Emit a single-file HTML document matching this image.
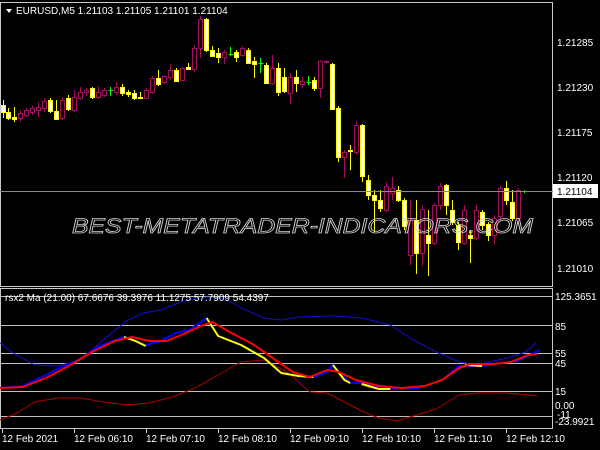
<!DOCTYPE html>
<html><head><meta charset="utf-8"><style>
html,body{margin:0;padding:0;background:#000;width:600px;height:450px;overflow:hidden}
svg{display:block}
text{font-family:"Liberation Sans",sans-serif}
</style></head><body>
<svg id="s" width="600" height="450" xmlns="http://www.w3.org/2000/svg">
<defs><clipPath id="cp"><rect x="0" y="288" width="552" height="140"/></clipPath></defs>
<rect width="600" height="450" fill="#000"/>
<g id="c"></g>
<rect x="0.5" y="2.5" width="552" height="284" fill="none" stroke="#c8c8c8"/>
<rect x="0.5" y="288.5" width="552" height="140" fill="none" stroke="#c8c8c8"/>
<line x1="0" y1="191.5" x2="553" y2="191.5" stroke="#8c8c8c"/>
<g stroke="#c0c0c0" stroke-width="1">
<line x1="0" y1="296.5" x2="553" y2="296.5"/>
<line x1="0" y1="325.5" x2="553" y2="325.5"/>
<line x1="0" y1="353.5" x2="553" y2="353.5"/>
<line x1="0" y1="363.5" x2="553" y2="363.5"/>
<line x1="0" y1="391.5" x2="553" y2="391.5"/>
<line x1="0" y1="416.5" x2="553" y2="416.5"/>
</g>
<g clip-path="url(#cp)"><g id="ind" fill="none" stroke-linejoin="round" transform="scale(1.148,1)"></g></g>
<text x="72" y="233" font-size="21" font-style="italic" textLength="461" lengthAdjust="spacingAndGlyphs" fill="none" stroke="#d0d0d0" stroke-width="0.8">BEST-METATRADER-INDICATORS.COM</text>
<g fill="#fff" font-size="10">
<polygon points="6,9 12,9 9,13" fill="#fff"/>
<text x="16" y="14">EURUSD,M5  1.21103 1.21105 1.21101 1.21104</text>
<text x="557" y="46">1.21285</text>
<text x="557" y="91">1.21230</text>
<text x="557" y="136">1.21175</text>
<text x="557" y="181">1.21120</text>
<text x="557" y="226">1.21065</text>
<text x="557" y="272">1.21010</text>
<text x="5" y="301">rsx2 Ma (21.00) 67.6676 39.3976 11.1275 57.7909 54.4397</text>
<text x="555" y="300">125.3651</text>
<text x="555" y="330">85</text>
<text x="555" y="357">55</text>
<text x="555" y="367">45</text>
<text x="555" y="395">15</text>
<text x="555" y="409">0.00</text>
<text x="557" y="418">-11</text>
<text x="555" y="425">-23.9921</text>
<text x="2" y="442">12 Feb 2021</text>
<text x="74" y="442">12 Feb 06:10</text>
<text x="146" y="442">12 Feb 07:10</text>
<text x="218" y="442">12 Feb 08:10</text>
<text x="290" y="442">12 Feb 09:10</text>
<text x="362" y="442">12 Feb 10:10</text>
<text x="434" y="442">12 Feb 11:10</text>
<text x="506" y="442">12 Feb 12:10</text>
</g>
<rect x="553" y="184" width="45" height="14" fill="#fff"/>
<text x="557" y="195" font-size="10" fill="#000">1.21104</text>
<g stroke="#c8c8c8" id="ticks"></g>
</svg>
<script>
var NS="http://www.w3.org/2000/svg";
function el(p,n,a){var e=document.createElementNS(NS,n);for(var k in a)e.setAttribute(k,a[k]);p.appendChild(e);return e;}
var Y='y',M='m',G='g';
var bars=[[3,Y,105,112,100,118],[8,Y,112,118,108,120],[14,Y,117,119,107,122],[20,M,113,118,110,122],[26,M,110,115,108,117],[32,M,108,112,106,115],[38,M,107,110,102,117],[44,M,101,108,98,112],[50,Y,100,111,98,113],[56,Y,111,119,100,120],[62,M,100,118,97,120],[68,Y,98,109,95,111],[74,M,97,110,90,112],[80,M,92,98,87,100],[86,M,90,92,88,96],[92,Y,88,97,87,99],[98,M,92,97,86,99],[104,M,90,95,88,97],[110,G,90,90,87,96],[116,M,87,92,82,95],[122,Y,87,93,84,96],[128,Y,92,94,90,97],[134,Y,93,98,90,100],[140,Y,97,97,92,99],[146,M,90,98,88,99],[152,M,78,92,76,94],[158,Y,78,84,70,86],[164,M,76,82,75,84],[170,M,70,77,64,80],[176,Y,70,81,68,82],[182,M,68,80,67,81],[188,Y,67,69,63,70],[194,M,48,69,45,72],[200,M,19,48,16,58],[206,Y,19,50,18,52],[212,Y,50,56,46,57],[218,Y,53,57,48,63],[224,M,52,57,50,64],[230,G,54,54,47,56],[236,Y,52,57,50,62],[242,M,48,55,46,57],[248,Y,50,63,48,64],[254,Y,61,64,57,78],[260,G,63,63,58,73],[266,Y,65,83,63,84],[272,M,68,83,55,85],[278,Y,68,92,63,96],[284,Y,77,91,68,93],[290,M,77,93,73,104],[296,Y,77,83,70,92],[302,M,81,84,77,88],[308,G,82,82,76,85],[314,Y,80,88,77,91],[320,M,61,88,60,98],[326,M,61,62,60,63],[332,Y,64,109,63,110],[338,Y,108,157,106,162],[344,M,152,157,150,178],[350,Y,150,151,145,170],[356,M,125,152,121,155],[362,Y,125,176,124,182],[368,Y,180,195,175,200],[374,Y,195,200,190,232],[380,Y,200,208,190,212],[386,M,186,210,182,212],[392,M,188,193,177,200],[398,Y,190,200,186,202],[404,Y,200,226,198,230],[410,M,220,255,200,265],[416,Y,220,253,200,274],[422,M,209,253,205,266],[428,Y,235,243,210,276],[434,M,205,243,203,245],[440,M,186,205,183,210],[446,Y,185,205,184,215],[452,Y,210,222,200,225],[458,Y,225,242,222,250],[464,M,210,243,205,245],[470,Y,235,238,230,263],[476,M,210,238,205,240],[482,Y,212,225,210,230],[488,Y,224,235,222,241],[494,M,218,235,215,244],[500,M,188,216,186,220],[506,Y,188,200,181,205],[512,Y,202,218,190,221],[518,M,190,218,188,220],[524,G,191,191,190,193]];
var c=document.getElementById('c');
bars.forEach(function(b){
 var col=b[1]==Y?'#ffff00':b[1]==M?'#a0105a':'#00ff00';
 var x=b[0]+0.5;
 el(c,'line',{x1:x,y1:b[4],x2:x,y2:b[5],stroke:col,'stroke-width':1});
 if(b[1]==G){el(c,'line',{x1:x-2,y1:b[2]+.5,x2:x+3,y2:b[2]+.5,stroke:col});return;}
 var h=Math.max(b[3]-b[2],1);
 el(c,'rect',{x:x-2,y:b[2]+.5,width:4,height:h,fill:b[1]==Y?'#ffffff':'#000',stroke:col,'stroke-width':1});
});
var ind=document.getElementById('ind');
function pl(pts,col,w){el(ind,'polyline',{points:pts,stroke:col,'stroke-width':w,'vector-effect':'non-scaling-stroke'});}
pl("0,343 10,352 30,365 50,366 70,360 90,340 110,321 125,313 140,310 160,301 180,297 195,298 210,308 230,318 245,320 260,317 290,316 315,318 340,325 360,340 380,352 400,362 415,365 430,361 445,357 458,352 467,343","#1010d0",1);
pl("0,420 15,413 30,402 50,398 70,398 90,402 110,405 130,403 150,397 170,388 190,375 210,362 230,360 250,372 270,392 285,393 300,402 315,411 330,418 345,421 360,416 380,409 400,395 415,393 440,393 460,395 468,396","#b00000",1);
pl("0,388 20,386 40,375 50,369 70,359 85,347 105,338 108,337 127,345 140,341 153,333 165,330 180,318 190,336 210,345 230,358 245,373 260,376 273,377 285,372 290,365 305,383 315,383 340,389 365,388 385,380 400,366 420,366 430,364 450,361 465,353 470,350","#0000ff",2);
pl("108,337 118,341 127,346","#ffff00",2);
pl("180,318 190,336 210,345 230,358 245,373 260,376 273,377","#ffff00",2);
pl("290,365 300,380 305,383","#ffff00",2);
pl("315,384 330,389 340,389","#ffff00",2);
pl("405,365 420,366","#ffff00",2);
pl("0,388 20,387 40,378 60,366 80,352 100,341 115,337 130,341 145,341 160,334 175,326 185,322 200,332 220,344 240,360 255,372 270,377 285,370 295,372 310,380 330,386 350,388 370,386 385,380 400,368 410,364 430,364 445,362 460,355 468,354","#ff0000",2);
var t=document.getElementById('ticks');
[2,74,146,218,290,362,434,506].forEach(function(x){el(t,'line',{x1:x+.5,y1:429,x2:x+.5,y2:433});});
</script>
</body></html>
